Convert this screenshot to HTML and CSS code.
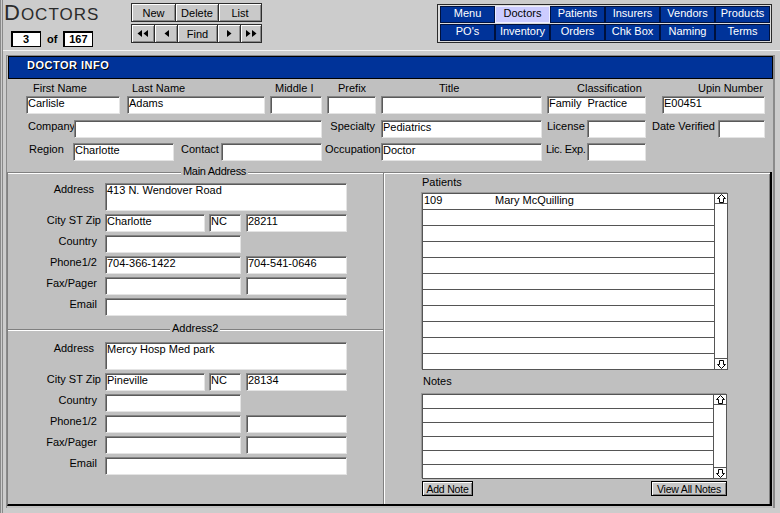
FILE: index.html
```html
<!DOCTYPE html>
<html lang="en">
<head>
<meta charset="utf-8">
<title>Doctors</title>
<link rel="stylesheet" href="styles.css">
</head>
<body>
<div class="app">
  <header class="topbar">
    <div class="brand">
      <div class="title">D<span class="title-sc">OCTORS</span></div>
      <div class="counter"><span class="count-box">3</span><span class="count-of">of</span><span class="count-box">167</span></div>
    </div>
    <div class="toolbar">
      <div class="tb-row">
        <button class="tb tb-new">New</button>
        <button class="tb tb-delete">Delete</button>
        <button class="tb tb-fill">List</button>
      </div>
      <div class="tb-row">
        <button class="tb tb-first" aria-label="First"><svg width="12" height="7" viewBox="0 0 12 7"><polygon points="5,0 5,7 0.5,3.5" fill="#000"/><polygon points="11,0 11,7 6.5,3.5" fill="#000"/></svg></button>
        <button class="tb tb-prev" aria-label="Previous"><svg width="5" height="7" viewBox="0 0 5 7"><polygon points="5,0 5,7 0.5,3.5" fill="#000"/></svg></button>
        <button class="tb tb-find">Find</button>
        <button class="tb tb-next" aria-label="Next"><svg width="5" height="7" viewBox="0 0 5 7"><polygon points="0,0 0,7 4.5,3.5" fill="#000"/></svg></button>
        <button class="tb tb-fill" aria-label="Last"><svg width="12" height="7" viewBox="0 0 12 7"><polygon points="1,0 1,7 5.5,3.5" fill="#000"/><polygon points="7,0 7,7 11.5,3.5" fill="#000"/></svg></button>
      </div>
    </div>
    <nav class="nav">
      <a class="nav-item">Menu</a>
      <a class="nav-item active">Doctors</a>
      <a class="nav-item">Patients</a>
      <a class="nav-item">Insurers</a>
      <a class="nav-item">Vendors</a>
      <a class="nav-item">Products</a>
      <a class="nav-item">PO's</a>
      <a class="nav-item">Inventory</a>
      <a class="nav-item">Orders</a>
      <a class="nav-item">Chk Box</a>
      <a class="nav-item">Naming</a>
      <a class="nav-item">Terms</a>
    </nav>
  </header>

  <main class="panel">
    <div class="panel-head">DOCTOR INFO</div>

    <section class="info">
      <div class="row1">
        <div class="fcol c-first"><div class="flabel">First Name</div><div class="field">Carlisle</div></div>
        <div class="fcol c-last"><div class="flabel">Last Name</div><div class="field">Adams</div></div>
        <div class="fcol c-mid"><div class="flabel">Middle I</div><div class="field"></div></div>
        <div class="fcol c-prefix"><div class="flabel">Prefix</div><div class="field"></div></div>
        <div class="fcol c-title"><div class="flabel">Title</div><div class="field"></div></div>
        <div class="fcol c-class"><div class="flabel">Classification</div><div class="field">Family&nbsp; Practice</div></div>
        <div class="fcol c-upin"><div class="flabel">Upin Number</div><div class="field">E00451</div></div>
      </div>
      <div class="row row2">
        <span class="rlabel l-company">Company</span><div class="field w-248"></div>
        <span class="rlabel l-specialty">Specialty</span><div class="field w-161">Pediatrics</div>
        <span class="rlabel l-license">License</span><div class="field w-59"></div>
        <span class="rlabel l-verified">Date Verified</span><div class="field w-47"></div>
      </div>
      <div class="row row3">
        <span class="rlabel l-region">Region</span><div class="field w-101">Charlotte</div>
        <span class="rlabel l-contact">Contact</span><div class="field w-101"></div>
        <span class="rlabel l-occupation">Occupation</span><div class="field w-161">Doctor</div>
        <span class="rlabel l-licexp">Lic. Exp.</span><div class="field w-59"></div>
      </div>
    </section>

    <div class="lower">
      <div class="col-left">
        <section class="addr addr-main">
          <div class="sec-title sec-main"><span>Main Address</span></div>
          <div class="addr-fields">
            <div class="arow"><span class="alabel lbl-address">Address</span><div class="field f-tall w-242">413 N. Wendover Road</div></div>
            <div class="arow"><span class="alabel lbl-city">City ST Zip</span><div class="field w-100">Charlotte</div><div class="field w-32 ml-4">NC</div><div class="field w-101 ml-5">28211</div></div>
            <div class="arow"><span class="alabel">Country</span><div class="field w-136"></div></div>
            <div class="arow"><span class="alabel">Phone1/2</span><div class="field w-136">704-366-1422</div><div class="field w-101 ml-5">704-541-0646</div></div>
            <div class="arow"><span class="alabel">Fax/Pager</span><div class="field w-136"></div><div class="field w-101 ml-5"></div></div>
            <div class="arow"><span class="alabel">Email</span><div class="field w-242"></div></div>
          </div>
        </section>
        <section class="addr addr-2">
          <div class="sec-title sec-2"><span>Address2</span></div>
          <div class="addr-fields">
            <div class="arow"><span class="alabel lbl-address">Address</span><div class="field f-tall w-242">Mercy Hosp Med park</div></div>
            <div class="arow"><span class="alabel lbl-city">City ST Zip</span><div class="field w-100">Pineville</div><div class="field w-32 ml-4">NC</div><div class="field w-101 ml-5">28134</div></div>
            <div class="arow"><span class="alabel">Country</span><div class="field w-136"></div></div>
            <div class="arow"><span class="alabel">Phone1/2</span><div class="field w-136"></div><div class="field w-101 ml-5"></div></div>
            <div class="arow"><span class="alabel">Fax/Pager</span><div class="field w-136"></div><div class="field w-101 ml-5"></div></div>
            <div class="arow"><span class="alabel">Email</span><div class="field w-242"></div></div>
          </div>
        </section>
      </div>

      <div class="col-right">
        <div class="list-label">Patients</div>
        <div class="listbox lb-patients">
          <div class="list-rows">
            <div class="list-row"><span class="pat-id">109</span><span>Mary McQuilling</span></div>
            <div class="list-row"></div>
            <div class="list-row"></div>
            <div class="list-row"></div>
            <div class="list-row"></div>
            <div class="list-row"></div>
            <div class="list-row"></div>
            <div class="list-row"></div>
            <div class="list-row"></div>
            <div class="list-row"></div>
            <div class="list-row"></div>
          </div>
          <div class="scroll">
            <div class="scroll-btn scroll-up"><svg width="9" height="9" viewBox="0 0 9 9"><path d="M4.5 0.5 L8.5 4.5 L6.5 4.5 L6.5 8.5 L2.5 8.5 L2.5 4.5 L0.5 4.5 Z" fill="none" stroke="#000" stroke-width="1"/></svg></div>
            <div class="scroll-btn scroll-down"><svg width="9" height="9" viewBox="0 0 9 9"><path d="M4.5 8.5 L8.5 4.5 L6.5 4.5 L6.5 0.5 L2.5 0.5 L2.5 4.5 L0.5 4.5 Z" fill="none" stroke="#000" stroke-width="1"/></svg></div>
          </div>
        </div>

        <div class="list-label notes-label">Notes</div>
        <div class="listbox lb-notes">
          <div class="list-rows">
            <div class="list-row"></div>
            <div class="list-row"></div>
            <div class="list-row"></div>
            <div class="list-row"></div>
            <div class="list-row"></div>
            <div class="list-row"></div>
          </div>
          <div class="scroll">
            <div class="scroll-btn scroll-up"><svg width="9" height="9" viewBox="0 0 9 9"><path d="M4.5 0.5 L8.5 4.5 L6.5 4.5 L6.5 8.5 L2.5 8.5 L2.5 4.5 L0.5 4.5 Z" fill="none" stroke="#000" stroke-width="1"/></svg></div>
            <div class="scroll-btn scroll-down"><svg width="9" height="9" viewBox="0 0 9 9"><path d="M4.5 8.5 L8.5 4.5 L6.5 4.5 L6.5 0.5 L2.5 0.5 L2.5 4.5 L0.5 4.5 Z" fill="none" stroke="#000" stroke-width="1"/></svg></div>
          </div>
        </div>
        <div class="note-actions">
          <button class="btn btn-add">Add Note</button>
          <button class="btn btn-view">View All Notes</button>
        </div>
      </div>
    </div>
  </main>
</div>
</body>
</html>
```

FILE: styles.css
```css
* { box-sizing: border-box; }
html, body { margin: 0; padding: 0; }
body {
  width: 780px;
  height: 513px;
  overflow: hidden;
  background: #cccccc;
  font-family: "Liberation Sans", Arial, sans-serif;
  font-size: 11px;
  color: #000;
}
.app {
  height: 513px;
  border-left: 3px double #8a8a8a;
}

/* ---------- top bar ---------- */
.topbar {
  height: 51px;
  border-bottom: 1px solid #f2f2f2;
  display: flex;
  align-items: flex-start;
}
.brand { margin-left: 1px; width: 127px; }
.title {
  height: 25px;
  line-height: 25px;
  font-size: 22px;
  letter-spacing: 1px;
  color: #2b2b2b;
  white-space: nowrap;
}
.title-sc { font-size: 17px; }
.counter {
  display: flex;
  align-items: center;
  margin-top: 6px;
  margin-left: 7px;
}
.count-box {
  width: 30px;
  height: 16px;
  border: 1px solid #000;
  box-shadow: inset 1px 1px 0 #000;
  background: #fff;
  font-weight: bold;
  text-align: center;
  line-height: 14px;
}
.count-of { font-weight: bold; margin: 0 6px; }

.toolbar { margin-top: 3px; width: 131px; }
.tb-row {
  display: flex;
  height: 19px;
  border: 1px solid #2d2d2d;
  background: #c9c9c9;
}
.tb-row + .tb-row { margin-top: 2px; }
.tb {
  font: inherit;
  margin: 0;
  padding: 0;
  border: 0;
  border-left: 1px solid #2d2d2d;
  background: #c9c9c9;
  box-shadow: inset 1px 1px 0 #fff, inset -1px -1px 0 #8a8a8a;
  height: 17px;
  color: #000;
  display: flex;
  align-items: center;
  justify-content: center;
}
.tb:first-child { border-left: 0; }
.tb-new { width: 43px; }
.tb-delete { width: 43px; }
.tb-first { width: 22px; }
.tb-prev { width: 23px; }
.tb-find { width: 40px; }
.tb-next { width: 23px; }
.tb-fill { flex: 1; }

.nav {
  margin-left: auto;
  margin-right: 8px;
  margin-top: 4px;
  display: grid;
  grid-template-columns: repeat(6, 55px);
  grid-template-rows: 17px 17px;
  row-gap: 1px;
  border: 1px solid #2a2a2a;
  padding: 1px 1px 1px 2px;
  background: #dcdcdc;
}
.nav-item {
  background: #003399;
  border: 1px solid #00113d;
  color: #fff;
  text-align: center;
  line-height: 13px;
  font-size: 11px;
  text-decoration: none;
  white-space: nowrap;
}
.nav-item.active {
  background: #ccccff;
  color: #000;
  border-color: #eeeeff;
  line-height: 12px;
}

/* ---------- panel ---------- */
.panel {
  margin: 4px 0 0 3px;
  width: 769px;
  height: 453px;
  border: solid #8a8a8a;
  border-width: 1px 2px 0 1px;
  background: #c0c0c0;
  padding: 0 0 2px 1px;
  display: flex;
  flex-direction: column;
}
.panel-head {
  flex: none;
  height: 23px;
  background: #003399;
  border: 1px solid #000;
  color: #fff;
  font-weight: bold;
  font-size: 11px;
  letter-spacing: 0.5px;
  padding: 1px 0 0 18px;
  line-height: 14px;
  text-shadow: 1px 1px 0 #000;
}

.field {
  height: 18px;
  background: #fff;
  border: 1px solid;
  border-color: #848484 #e4e4e4 #e4e4e4 #848484;
  box-shadow: inset 1px 1px 0 #5a5a5a;
  padding: 0 0 0 1px;
  line-height: 12px;
  white-space: nowrap;
  overflow: hidden;
  flex: none;
}

.info { flex: none; padding: 3px 0 11px 0; }
.row1 { display: flex; margin-left: 18px; }
.fcol { display: flex; flex-direction: column; }
.flabel { height: 12px; line-height: 12px; margin-bottom: 2px; white-space: nowrap; }
.c-first { width: 94px; }
.c-first .flabel { padding-left: 7px; }
.c-last { width: 138px; margin-left: 7px; }
.c-last .flabel { padding-left: 5px; }
.c-mid { width: 52px; margin-left: 5px; }
.c-mid .flabel { padding-left: 5px; }
.c-prefix { width: 49px; margin-left: 5px; }
.c-prefix .flabel { padding-left: 11px; }
.c-title { width: 161px; margin-left: 5px; }
.c-title .flabel { padding-left: 58px; }
.c-class { width: 99px; margin-left: 5px; }
.c-class .flabel { padding-left: 30px; }
.c-upin { width: 103px; margin-left: 16px; }
.c-upin .flabel { padding-left: 36px; }

.row { display: flex; align-items: flex-start; }
.row2 { margin-top: 6px; }
.row3 { margin-top: 5px; }
.rlabel { flex: none; line-height: 12px; white-space: nowrap; }
.l-company { margin-left: 20px; width: 46px; }
.l-specialty { width: 59px; text-align: right; padding-right: 6px; }
.l-license { width: 45px; padding-left: 5px; }
.l-verified { width: 72px; padding-left: 6px; }
.l-region { margin-left: 21px; width: 44px; }
.l-contact { width: 47px; padding-left: 7px; }
.l-occupation { width: 59px; padding-left: 3px; }
.l-licexp { width: 45px; padding-left: 4px; letter-spacing: -0.3px; }

.w-32 { width: 32px; }
.w-47 { width: 47px; }
.w-59 { width: 59px; }
.w-100 { width: 100px; }
.w-101 { width: 101px; }
.w-136 { width: 136px; }
.w-161 { width: 161px; }
.w-242 { width: 242px; }
.w-248 { width: 248px; }
.ml-4 { margin-left: 4px; }
.ml-5 { margin-left: 5px; }
.f-tall { height: 28px; }

/* ---------- lower area ---------- */
.lower {
  flex: 1;
  display: flex;
  margin: 0 1px 0 -1px;
  border-left: 1px solid #808080;
  border-right: 2px solid #000;
  border-bottom: 2px solid #000;
  box-shadow: inset -1px 0 0 #808080;
}
.col-left { width: 375px; display: flex; flex-direction: column; }
.addr {
  border-top: 1px solid #808080;
  box-shadow: inset 0 1px 0 #fff;
}
.addr-main { padding-bottom: 13px; }
.addr-2 { flex: 1; }
.sec-title {
  height: 12px;
  line-height: 12px;
  margin-top: -8px;
  white-space: nowrap;
}
.sec-title span { background: #c0c0c0; padding: 0 2px; }
.sec-main { padding-left: 173px; letter-spacing: -0.3px; }
.sec-2 { padding-left: 162px; }
.addr-fields { margin-top: 6px; display: flex; flex-direction: column; gap: 3px; }
.addr-2 .addr-fields { margin-top: 8px; }
.arow { display: flex; align-items: flex-start; }
.alabel {
  flex: none;
  width: 89px;
  margin-right: 8px;
  text-align: right;
  line-height: 12px;
  white-space: nowrap;
}
.lbl-address { padding-right: 3px; }
.lbl-city { width: 93px; margin-right: 4px; }

.col-right {
  flex: 1;
  border-top: 1px solid #808080;
  border-left: 1px solid #808080;
  box-shadow: inset 1px 1px 0 #fff;
  padding: 3px 0 0 38px;
}
.list-label { height: 12px; line-height: 12px; margin-bottom: 5px; }
.notes-label { margin-top: 5px; margin-bottom: 7px; padding-left: 1px; }
.listbox {
  display: flex;
  border: 1px solid #555;
  box-shadow: -1px -1px 0 #9a9a9a;
  background: #fff;
}
.lb-patients { width: 306px; }
.lb-notes { width: 305px; }
.list-rows { flex: 1; }
.list-row {
  height: 16px;
  border-bottom: 1px solid #555;
  line-height: 12px;
  padding-left: 1px;
  white-space: nowrap;
}
.list-row:last-child { border-bottom: 0; height: 15px; }
.lb-notes .list-row { height: 14px; }
.lb-notes .list-row:last-child { height: 13px; }
.pat-id { display: inline-block; width: 71px; }
.scroll {
  width: 13px;
  border-left: 1px solid #555;
  display: flex;
  flex-direction: column;
  justify-content: space-between;
}
.scroll-btn { display: flex; align-items: center; justify-content: center; }
.scroll-up { height: 10px; border-bottom: 1px solid #555; }
.scroll-down { height: 11px; border-top: 1px solid #555; }
.scroll svg { display: block; }

.note-actions {
  display: flex;
  justify-content: space-between;
  width: 305px;
  margin-top: 2px;
}
.btn {
  font: inherit;
  font-size: 10.5px;
  letter-spacing: -0.2px;
  margin: 0;
  height: 15px;
  padding: 0;
  border: 1px solid #000;
  background: #c8c8c8;
  color: #000;
  box-shadow: inset 1px 1px 0 #fff, inset -1px -1px 0 #808080;
  line-height: 12px;
}
.btn-add { width: 51px; }
.btn-view { width: 76px; }
```
